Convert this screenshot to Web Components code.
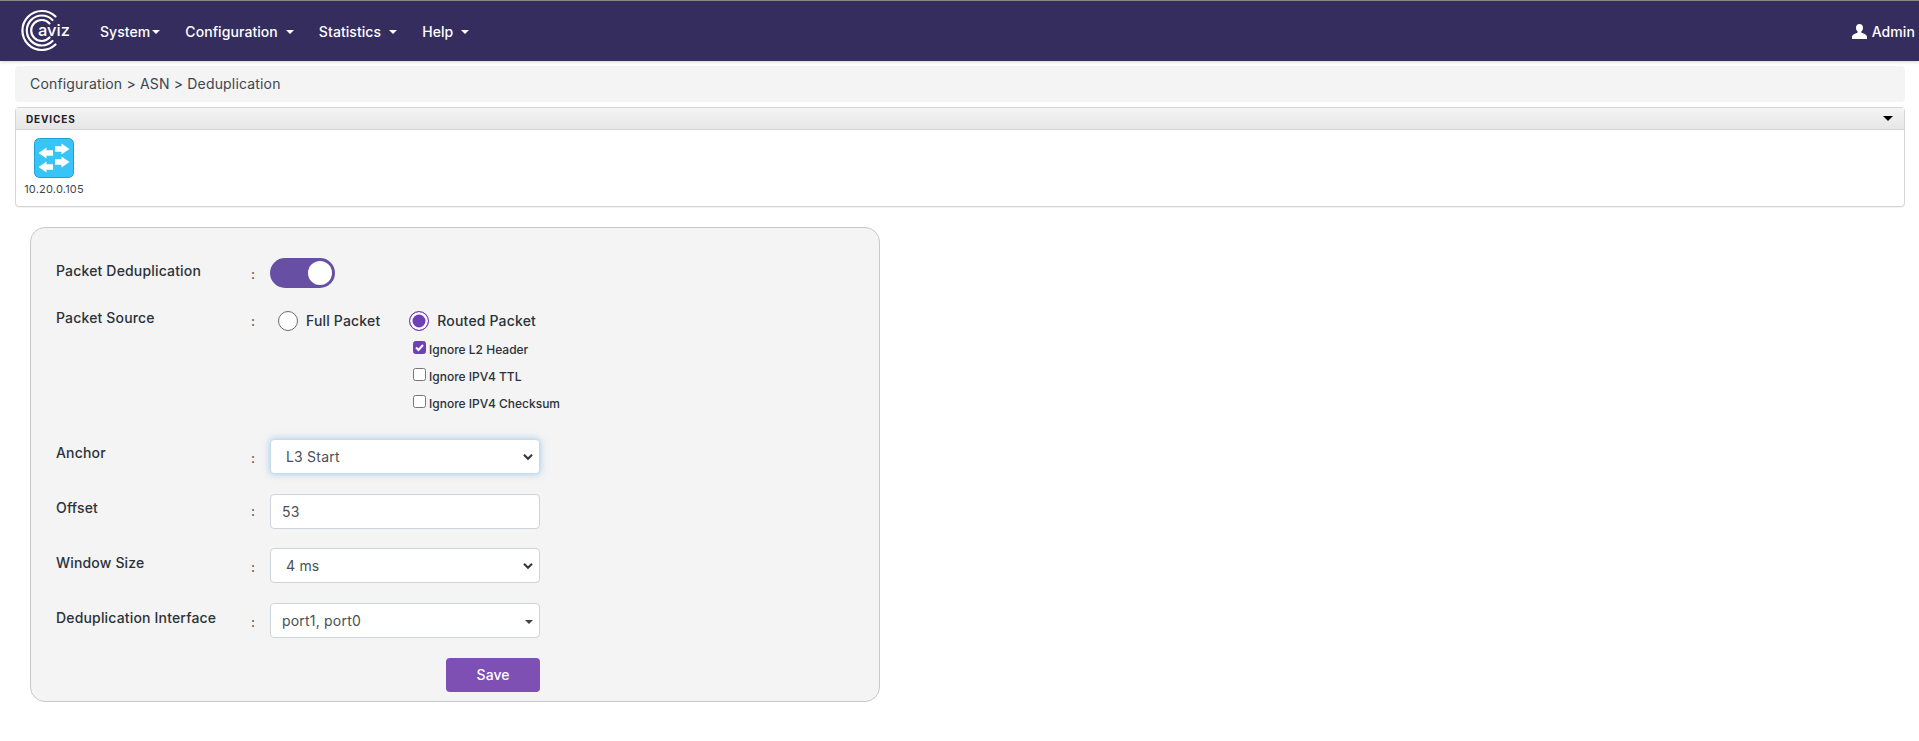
<!DOCTYPE html>
<html lang="en"><head><meta charset="utf-8"><title>Deduplication</title>
<style>
html,body{margin:0;padding:0;background:#fff;font-family:Inter,"Liberation Sans",sans-serif;color:#333}
</style></head><body>
<app-navbar>
  <nav-item slot="menu" label="System" gap="2"></nav-item>
  <nav-item slot="menu" label="Configuration" gap="8"></nav-item>
  <nav-item slot="menu" label="Statistics" gap="8"></nav-item>
  <nav-item slot="menu" label="Help" gap="8"></nav-item>
</app-navbar>
<bread-crumb>Configuration &gt; ASN &gt; Deduplication</bread-crumb>
<device-panel title-text="DEVICES"><device-tile ip="10.20.0.105"></device-tile></device-panel>
<form-card>
  <form-row label="Packet Deduplication" rowtop="0" labeltop="3" colontop="6"><toggle-switch></toggle-switch></form-row>
  <form-row label="Packet Source" rowtop="18" labeltop="2" colontop="5">
    <source-options></source-options>
  </form-row>
  <form-row label="Anchor" rowtop="22" labeltop="4" colontop="9"><select-box value="L3 Start" focused></select-box></form-row>
  <form-row label="Offset" rowtop="20" labeltop="4" colontop="7"><text-box value="53"></text-box></form-row>
  <form-row label="Window Size" rowtop="19" labeltop="5" colontop="9"><select-box value="4 ms"></select-box></form-row>
  <form-row label="Deduplication Interface" rowtop="20" labeltop="5" colontop="9"><multi-box value="port1, port0"></multi-box></form-row>
  <form-actions><save-button>Save</save-button></form-actions>
</form-card>
<script>
function def(name, css, html){
  customElements.define(name, class extends HTMLElement{
    constructor(){super();this.attachShadow({mode:'open'});}
    connectedCallback(){
      if(this._d)return;this._d=1;
      this.shadowRoot.innerHTML='<style>'+css+'</style>'+(typeof html==='function'?html(this):html);
    }
  });
}
const A=(e,n)=>e.getAttribute(n)||'';
def('app-navbar',`
:host{display:flex;align-items:center;height:60px;background:#352d5e;border-top:1px solid #8a8a8a;color:#fff;box-shadow:0 1px 3px rgba(0,0,0,.18);position:relative}
.logo{width:48px;height:44px;margin-left:21px;position:relative;flex:none}
.logo svg{display:block}
.logo span{position:absolute;left:17px;top:10px;font:500 16.500px/22px Inter,sans-serif;color:#fff}
.menu{display:flex;margin-left:31px;gap:25px;flex:none;padding-top:2px}
.user{margin-left:auto;margin-right:4px;display:flex;align-items:center;gap:5px;font:500 14px/20px Inter,sans-serif;letter-spacing:.1px;padding-top:1px}
`,`
<div class="logo"><svg width="48" height="44" viewBox="0 0 48 44" fill="none" stroke="#fff" stroke-width="2.200" stroke-linecap="round">
<path d="M34.500 7.500A19.500 19.500 0 1 0 34.500 35.500"/>
<path d="M31.500 11A15 15 0 1 0 31.500 32"/>
<path d="M28.500 14.500A10.500 10.500 0 1 0 28.500 28.500"/>
</svg><span>aviz</span></div>
<div class="menu"><slot name="menu"></slot></div>
<div class="user"><svg width="15" height="15" viewBox="0 0 15 15" fill="#fff"><path d="M7.500 0C5.300 0 4 1.600 4 3.800c0 1.600.7 3 1.600 3.800.3.4.2 1-.3 1.200C3 9.800.3 10.400 0 12.500V15h15v-2.500c-.3-2.100-3-2.700-5.300-3.700-.5-.2-.6-.8-.3-1.200.9-.8 1.600-2.200 1.600-3.800C11 1.600 9.700 0 7.500 0z"/></svg>Admin</div>
`);
def('nav-item',`
:host{display:flex;align-items:center;font:500 14px/20px Inter,sans-serif;letter-spacing:.07px;color:#fff;white-space:nowrap}
i{display:block;width:0;height:0;border:4px solid transparent;border-top-color:#fff;border-bottom:0}
`,e=>`<span>${A(e,'label')}</span><i style="margin-left:${A(e,'gap')}px"></i>`);
def('bread-crumb',`
:host{display:block;margin:5px 14px 0 15px;height:36px;box-sizing:border-box;padding:0 15px;background:#f4f4f4;border-radius:4px;font:400 14px/36px Inter,sans-serif;letter-spacing:.17px;color:#3c4650}
`,`<slot></slot>`);
def('device-panel',`
:host{display:block;margin:5px 14px 0 15px;height:100px;box-sizing:border-box;border:1px solid #d5d5d5;border-radius:4px;background:#fff;box-shadow:0 1px 1px rgba(0,0,0,.06)}
header{height:22px;box-sizing:border-box;display:flex;align-items:center;justify-content:space-between;padding:0 11px 0 10px;background:linear-gradient(#f4f4f4,#e6e6e6);border-bottom:1px solid #d5d5d5;font:700 10px/12px Inter,sans-serif;letter-spacing:.85px;color:#1d2126}
i{display:block;width:0;height:0;border:5px solid transparent;border-top-color:#000;border-bottom:0}
.b{padding:8px 0 0 8px}
`,e=>`<header><span>${A(e,'title-text')}</span><i></i></header><div class="b"><slot></slot></div>`);
def('device-tile',`
:host{display:inline-flex;flex-direction:column;align-items:center;width:60px;font:400 11px/14px Inter,sans-serif;letter-spacing:.2px;color:#3c4650;white-space:nowrap}
svg{display:block;margin-bottom:4px}
`,e=>`<svg width="40" height="40" viewBox="0 0 40 40"><rect x=".5" y=".5" width="39" height="39" rx="5" fill="#36c5f6" stroke="#1f9fd6"/>
<g fill="#fff"><path d="M4.500 15l8-5.500v2.800h6.500v5.400h-6.500v2.800z"/><path d="M35.500 11l-8-5.500v2.800H21v5.400h6.500v2.800z"/><path d="M4.500 29l8-5.500v2.800h6.500v5.400h-6.500v2.800z"/><path d="M35.500 24l-8-5.500v2.800H21v5.400h6.500v2.800z"/></g></svg><span>${A(e,'ip')}</span>`);
def('form-card',`
:host{display:block;margin:20px 0 0 30px;width:850px;height:475px;box-sizing:border-box;padding:30px 0 0 25px;background:#f4f4f4;border:1px solid #c8c8c8;border-radius:15px}
`,`<slot></slot>`);
def('form-row',`
:host{display:grid;grid-template-columns:195px 19px 270px;align-items:start;font:500 14px/20px Inter,sans-serif;color:#2b3238;white-space:nowrap}
.l{letter-spacing:.17px}.c{font-size:13px;color:#333}
`,e=>`<style>:host{margin-top:${A(e,'rowtop')}px}</style><div class="l" style="padding-top:${A(e,'labeltop')}px">${A(e,'label')}</div><div class="c" style="padding-top:${A(e,'colontop')}px">:</div><div><slot></slot></div>`);
def('toggle-switch',`
:host{display:block;width:65px;height:30px;border-radius:15px;background:#6750a4;position:relative}
b{position:absolute;right:3px;top:3px;width:24px;height:24px;border-radius:50%;background:#fff}
`,`<b></b>`);
def('source-options',`
:host{display:block;font:500 14px/20px Inter,sans-serif;letter-spacing:.17px;color:#2b3238}
.r{display:flex;align-items:center;height:20px;padding:5px 0 0 8px}
.o{margin-right:29px}
.k{display:block;margin:0 0 0 143px;padding-top:5px}
`,`<div class="r"><radio-opt class="o">Full Packet</radio-opt><radio-opt class="o" checked>Routed Packet</radio-opt></div>
<div class="k"><check-opt checked>Ignore L2 Header</check-opt><check-opt>Ignore IPV4 TTL</check-opt><check-opt>Ignore IPV4 Checksum</check-opt></div>`);
def('radio-opt',`
:host{display:flex;align-items:center;gap:8px;white-space:nowrap}
i{display:block;flex:none;box-sizing:border-box;width:20px;height:20px;border-radius:50%;background:#fff;border:1px solid #6b6b6b}
:host([checked]) i{border:1.500px solid #6f3fb5;box-shadow:inset 0 0 0 2.500px #fff;background:#6f3fb5}
`,`<i></i><span><slot></slot></span>`);
def('check-opt',`
:host{display:flex;align-items:center;gap:3px;height:27px;font:500 12px/16px Inter,sans-serif;letter-spacing:0;color:#2b3238;white-space:nowrap}
i{display:block;flex:none;box-sizing:border-box;width:13px;height:13px;border-radius:2.500px;background:#fff;border:1px solid #767676;position:relative;top:-2px}
:host([checked]) i{background:#6f3fb5;border-color:#6f3fb5}
svg{display:block}
`,e=>`<i>${e.hasAttribute('checked')?'<svg width="11" height="11" viewBox="0 0 11 11" fill="none" stroke="#fff" stroke-width="2"><path d="M2 5.500l2.500 2.500L9 3"/></svg>':''}</i><span><slot></slot></span>`);
const chev='<svg width="12" height="8" viewBox="0 0 12 8" fill="none" stroke="#333" stroke-width="2"><path d="M2 1.800l4 4 4-4"/></svg>';
const boxCss=`:host{display:flex;align-items:center;justify-content:space-between;width:270px;height:35px;box-sizing:border-box;background:#fff;border:1px solid #ced4da;border-radius:4px;font:400 14px/20px Inter,sans-serif;letter-spacing:.2px;color:#495057}
:host([focused]){border-color:#c4dbf0;box-shadow:0 0 7px rgba(90,155,225,.5)}`;
def('select-box',boxCss+`:host{padding:0 5px 0 15px}`,e=>`<span>${A(e,'value')}</span>${chev}`);
def('text-box',boxCss+`:host{padding:0 11px}`,e=>`<span>${A(e,'value')}</span>`);
def('multi-box',boxCss+`:host{padding:0 6px 0 11px}i{display:block;width:0;height:0;border:4px solid transparent;border-top-color:#444;border-bottom:0;margin-top:2px}`,e=>`<span>${A(e,'value')}</span><i></i>`);
def('form-actions',`:host{display:flex;justify-content:flex-end;width:484px;margin-top:20px}`,`<slot></slot>`);
def('save-button',`:host{display:flex;align-items:center;justify-content:center;width:94px;height:34px;border-radius:4px;background:#7e50b4;color:#fff;font:500 14px/20px Inter,sans-serif}`,`<slot></slot>`);
</script>
</body></html>
